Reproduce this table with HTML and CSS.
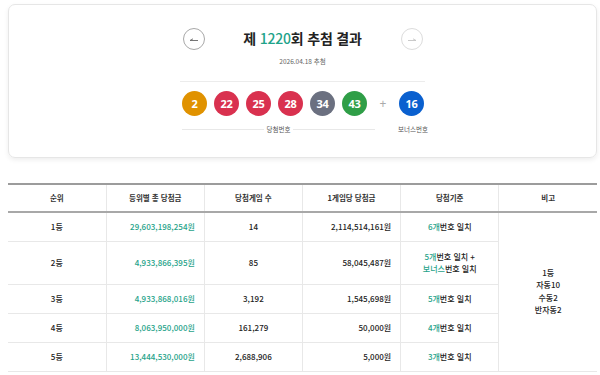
FILE: index.html
```html
<!DOCTYPE html>
<html lang="ko">
<head>
<meta charset="utf-8">
<link rel="stylesheet" href="styles.css">
</head>
<body>
<section class="card">
  <div class="head">
    <button class="nav">
      <svg width="12" height="12" viewBox="0 0 12 12"><path d="M2 7.5 H10 M2 7.5 L5 5.8" fill="none" stroke="#666" stroke-width="0.9"/></svg>
    </button>
    <h1 class="title">제 <span class="hl">1220</span>회 추첨 결과</h1>
    <button class="nav off">
      <svg width="12" height="12" viewBox="0 0 12 12"><path d="M2 7.5 H10 M10 7.5 L7 5.8" fill="none" stroke="#c4c4c4" stroke-width="0.9"/></svg>
    </button>
  </div>
  <p class="date">2026.04.18 추첨</p>
  <div class="draw">
    <div class="balls">
      <span class="ball y">2</span>
      <span class="ball r">22</span>
      <span class="ball r">25</span>
      <span class="ball r">28</span>
      <span class="ball g">34</span>
      <span class="ball gr">43</span>
      <span class="plus">+</span>
      <span class="ball b">16</span>
    </div>
    <div class="labels">
      <div class="main-label"><i class="ln"></i><span>당첨번호</span><i class="ln"></i></div>
      <span class="bonus-label">보너스번호</span>
    </div>
  </div>
</section>

<table class="prize">
  <thead>
    <tr><th>순위</th><th>등위별 총 당첨금</th><th>당첨게임 수</th><th>1게임당 당첨금</th><th>당첨기준</th><th>비고</th></tr>
  </thead>
  <tbody>
    <tr><td>1등</td><td class="amt hl">29,603,198,254원</td><td>14</td><td class="amt">2,114,514,161원</td><td><span class="hl">6개</span>번호 일치</td>
      <td rowspan="5" class="note">1등<br>자동10<br>수동2<br>반자동2</td></tr>
    <tr class="tall"><td>2등</td><td class="amt hl">4,933,866,395원</td><td>85</td><td class="amt">58,045,487원</td><td><span class="hl">5개</span>번호 일치 +<br><span class="hl">보너스</span>번호 일치</td></tr>
    <tr><td>3등</td><td class="amt hl">4,933,868,016원</td><td>3,192</td><td class="amt">1,545,698원</td><td><span class="hl">5개</span>번호 일치</td></tr>
    <tr><td>4등</td><td class="amt hl">8,063,950,000원</td><td>161,279</td><td class="amt">50,000원</td><td><span class="hl">4개</span>번호 일치</td></tr>
    <tr><td>5등</td><td class="amt hl">13,444,530,000원</td><td>2,688,906</td><td class="amt">5,000원</td><td><span class="hl">3개</span>번호 일치</td></tr>
  </tbody>
</table>
</body>
</html>
```
FILE: styles.css
```css
* { box-sizing: border-box; }
body {
  margin: 0;
  background: #fff;
  font-family: "Noto Sans CJK KR", "Noto Sans", sans-serif;
  color: #222;
}
.card {
  margin: 4px 3px 0 8px;
  width: 589px;
  height: 154px;
  border: 1px solid #e6e6e6;
  border-radius: 7px;
  box-shadow: 0 2px 5px rgba(0,0,0,0.07);
  padding-top: 22px;
  display: flex;
  flex-direction: column;
  align-items: center;
}
.head {
  width: 240px;
  display: flex;
  align-items: center;
  justify-content: space-between;
}
.nav {
  width: 22px;
  height: 22px;
  border-radius: 50%;
  border: 1px solid #a8a8a8;
  background: #fff;
  padding: 0;
  display: flex;
  align-items: center;
  justify-content: center;
}
.nav.off { border-color: #dcdcdc; }
.title {
  margin: 0 0 2px;
  font-size: 14px;
  font-weight: 700;
  line-height: 22px;
  color: #222;
  letter-spacing: -0.2px;
}
.hl { color: #1fa38a; }
.title .hl { font-weight: 500; }
.date {
  margin: 5px 0 0;
  font-size: 6.5px;
  color: #666;
  line-height: 10px;
}
.draw {
  margin-top: 15px;
  width: 245px;
  border-top: 1px solid #ececec;
  padding-top: 9px;
}
.balls {
  display: flex;
  align-items: center;
  gap: 7px;
  padding-left: 2px;
}
.ball {
  width: 25px;
  height: 25px;
  border-radius: 50%;
  color: #fff;
  font-family: "Noto Sans", "Roboto", sans-serif;
  font-weight: 700;
  font-size: 11px;
  display: flex;
  align-items: center;
  justify-content: center;
  letter-spacing: -0.3px;
}
.y { background: #e09200; }
.r { background: #d9314f; }
.g { background: #6b7080; }
.gr { background: #2f9e47; }
.b { background: #0a60cf; }
.plus {
  width: 18px;
  text-align: center;
  color: #aaa;
  font-size: 12px;
  font-family: "Noto Sans", sans-serif;
}
.labels {
  display: flex;
  align-items: center;
  margin-top: 8px;
  padding-left: 2px;
  font-size: 6.5px;
  color: #555;
  line-height: 10px;
}
.main-label {
  width: 193px;
  display: flex;
  align-items: center;
  gap: 3px;
}
.ln { flex: 1; height: 1px; background: #e8e8e8; }
.bonus-label { margin-left: 23px; width: 27px; text-align: center; white-space: nowrap; }

.prize {
  margin: 25px 0 0 8px;
  width: 589px;
  border-collapse: collapse;
  table-layout: fixed;
  font-size: 8px;
  font-weight: 500;
  color: #222;
}
.prize th, .prize td {
  border-left: 1px solid #e8e8e8;
  text-align: center;
  vertical-align: middle;
  padding: 0 9px;
  line-height: 12px;
}
.prize th:first-child, .prize td:first-child { border-left: none; }
.prize thead tr { border-top: 2px solid #9c9c9c; border-bottom: 2px solid #a8a8a8; }
.prize th {
  height: 28px;
  font-size: 7.5px;
  font-weight: 700;
  color: #333;
}
.prize tbody tr { border-bottom: 1px solid #e8e8e8; height: 29px; }
.prize tbody tr.tall { height: 43px; }
.prize td.amt { text-align: right; }
.prize td.note { line-height: 12.5px; }
```
